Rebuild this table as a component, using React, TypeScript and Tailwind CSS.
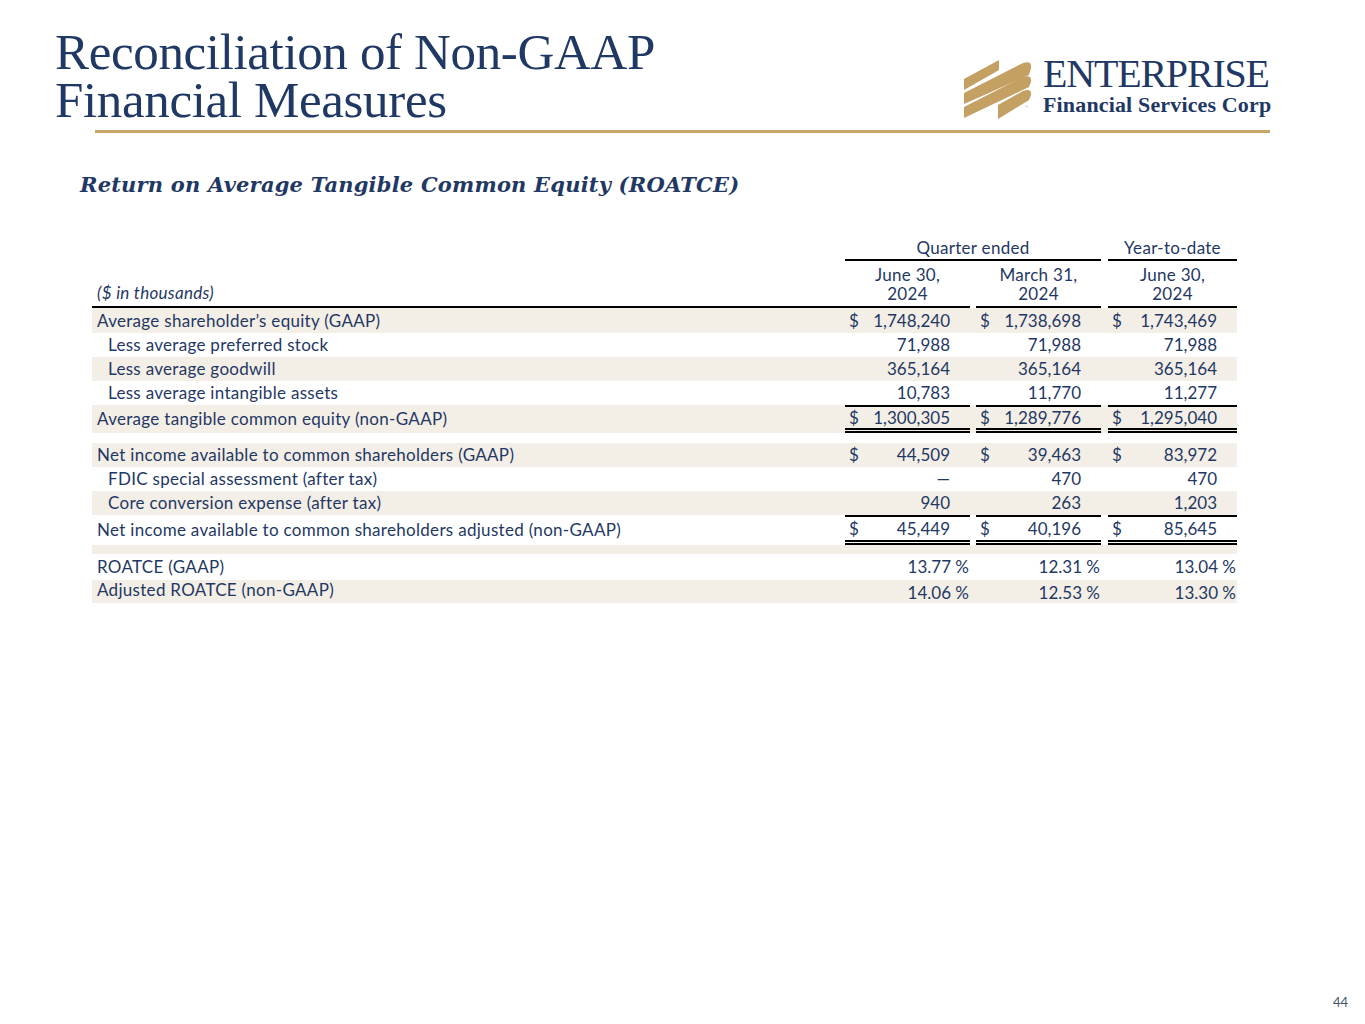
import React from "react"

type Row = {
  label: string
  indent?: boolean
  shade?: boolean
  dollar?: boolean
  total?: boolean
  pct?: boolean
  values: string[]
  h: string
}

const rows: Row[] = [
  { label: "Average shareholder’s equity (GAAP)", shade: true, dollar: true, values: ["1,748,240", "1,738,698", "1,743,469"], h: "h-[25px]" },
  { label: "Less average preferred stock", indent: true, values: ["71,988", "71,988", "71,988"], h: "h-[24px]" },
  { label: "Less average goodwill", indent: true, shade: true, values: ["365,164", "365,164", "365,164"], h: "h-[24px]" },
  { label: "Less average intangible assets", indent: true, values: ["10,783", "11,770", "11,277"], h: "h-[24px]" },
  { label: "Average tangible common equity (non-GAAP)", shade: true, dollar: true, total: true, values: ["1,300,305", "1,289,776", "1,295,040"], h: "h-[28px]" },
]

const rows2: Row[] = [
  { label: "Net income available to common shareholders (GAAP)", shade: true, dollar: true, values: ["44,509", "39,463", "83,972"], h: "h-[24px]" },
  { label: "FDIC special assessment (after tax)", indent: true, values: ["—", "470", "470"], h: "h-[24px]" },
  { label: "Core conversion expense (after tax)", indent: true, shade: true, values: ["940", "263", "1,203"], h: "h-[24px]" },
  { label: "Net income available to common shareholders adjusted (non-GAAP)", dollar: true, total: true, values: ["45,449", "40,196", "85,645"], h: "h-[30px]" },
]

function Logo() {
  return (
    <div className="flex items-start">
      <svg width="72" height="64" viewBox="0 0 72 64">
        <g fill="#c4a063">
          <polygon points="2,22 37,3 37,13 2,33" />
          <path d="M2 36 L61 6 Q70 3 69 11 L67 18 L2 47 Z" />
          <path d="M2 50 L61 20 Q70 17 69 25 L67 30 L2 61 Z" />
          <path d="M36 48 L61 34 Q70 31 69 38 L67 43 L36 62 Z" />
        </g>
        <text x="63" y="51" fontSize="4" fill="#c4a063" fontFamily="Liberation Sans, sans-serif">®</text>
      </svg>
      <div className="ml-[9px] mt-[-2px] flex flex-col text-[#1f3864]">
        <span className="font-['Liberation_Serif',serif] text-[40px] leading-[38px] tracking-[-1.2px]">ENTERPRISE</span>
        <span className="font-['Liberation_Serif',serif] text-[22px] font-bold leading-[24px] tracking-[0.15px]">Financial Services Corp</span>
      </div>
    </div>
  )
}

function ValueCell({ r, v, w }: { r: Row; v: string; w: string }) {
  const border = r.total ? "border-t-[2px] border-b-[5px] border-double border-black" : ""
  return (
    <div className={`${w} flex h-full items-center ${border}`}>
      {r.pct ? (
        <span className="ml-auto pr-[1px]">{v}</span>
      ) : (
        <>
          <span className="pl-[4px]">{r.dollar ? "$" : ""}</span>
          <span className="ml-auto pr-[20px]">{v}</span>
        </>
      )}
    </div>
  )
}

function TableRow({ r }: { r: Row }) {
  return (
    <div className={`flex ${r.h} ${r.shade ? "bg-[#f3eee6]" : ""}`}>
      <div className={`flex w-[753px] items-center tracking-[0.3px] ${r.indent ? "pl-[16px]" : "pl-[5px]"}`}>{r.label}</div>
      <ValueCell r={r} v={r.values[0]} w="w-[125px]" />
      <div className="w-[6px]" />
      <ValueCell r={r} v={r.values[1]} w="w-[125px]" />
      <div className="w-[7px]" />
      <ValueCell r={r} v={r.values[2]} w="w-[129px]" />
    </div>
  )
}

export default function App() {
  return (
    <div className="flex h-[1024px] w-[1365px] flex-col bg-white text-[#1f3864]">
      {/* Header */}
      <div className="flex items-start">
        <div className="w-[962px] pl-[55px] pt-[28px] font-['Liberation_Serif',serif] text-[51px] leading-[48px] tracking-[-0.35px]">
          <div>Reconciliation of Non-GAAP</div>
          <div>Financial Measures</div>
        </div>
        <div className="pt-[57px]">
          <Logo />
        </div>
      </div>
      <div className="ml-[95px] mt-[6px] h-[3px] w-[1175px] bg-[#c8a56b]" />

      <div className="mt-[38px] pl-[80px] font-['DejaVu_Serif',serif] text-[21px] font-bold italic leading-[28px] tracking-[0.2px]">
        Return on Average Tangible Common Equity (ROATCE)
      </div>

      {/* Table */}
      <div className="ml-[92px] mt-[39px] w-[1145px] font-['Lato',sans-serif] text-[17px] leading-[20px]">
        <div className="flex h-[23px] tracking-[0.3px]">
          <div className="w-[753px]" />
          <div className="flex w-[256px] justify-center border-b-[2px] border-black">Quarter ended</div>
          <div className="w-[7px]" />
          <div className="flex w-[129px] justify-center border-b-[2px] border-black">Year-to-date</div>
        </div>
        <div className="flex h-[47px] tracking-[0.3px]">
          <div className="flex w-[753px] items-end border-b-[2px] border-black pb-[3px] pl-[5px] italic">($ in thousands)</div>
          <div className="flex w-[125px] flex-col items-center justify-end border-b-[2px] border-black pb-[3px] leading-[19px]">
            <span>June 30,</span>
            <span>2024</span>
          </div>
          <div className="w-[6px]" />
          <div className="flex w-[125px] flex-col items-center justify-end border-b-[2px] border-black pb-[3px] leading-[19px]">
            <span>March 31,</span>
            <span>2024</span>
          </div>
          <div className="w-[7px]" />
          <div className="flex w-[129px] flex-col items-center justify-end border-b-[2px] border-black pb-[3px] leading-[19px]">
            <span>June 30,</span>
            <span>2024</span>
          </div>
        </div>

        {rows.map((r) => (
          <TableRow key={r.label} r={r} />
        ))}
        <div className="h-[10px]" />
        {rows2.map((r) => (
          <TableRow key={r.label} r={r} />
        ))}
        <div className="h-[9px] bg-[#f3eee6]" />

        <TableRow r={{ label: "ROATCE (GAAP)", pct: true, values: ["13.77 %", "12.31 %", "13.04 %"], h: "h-[26px]" }} />
        <div className="flex h-[23px] bg-[#f3eee6]">
          <div className="w-[753px] pl-[5px] tracking-[0.3px]">Adjusted ROATCE (non-GAAP)</div>
          <div className="flex w-[125px] items-end justify-end pr-[1px]">14.06 %</div>
          <div className="w-[6px]" />
          <div className="flex w-[125px] items-end justify-end pr-[1px]">12.53 %</div>
          <div className="w-[7px]" />
          <div className="flex w-[129px] items-end justify-end pr-[1px]">13.30 %</div>
        </div>
      </div>

      {/* Footer */}
      <div className="flex-1" />
      <div className="flex justify-end pb-[12px] pr-[17px] font-['Lato',sans-serif] text-[13px] text-[#44546a]">44</div>
    </div>
  )
}
